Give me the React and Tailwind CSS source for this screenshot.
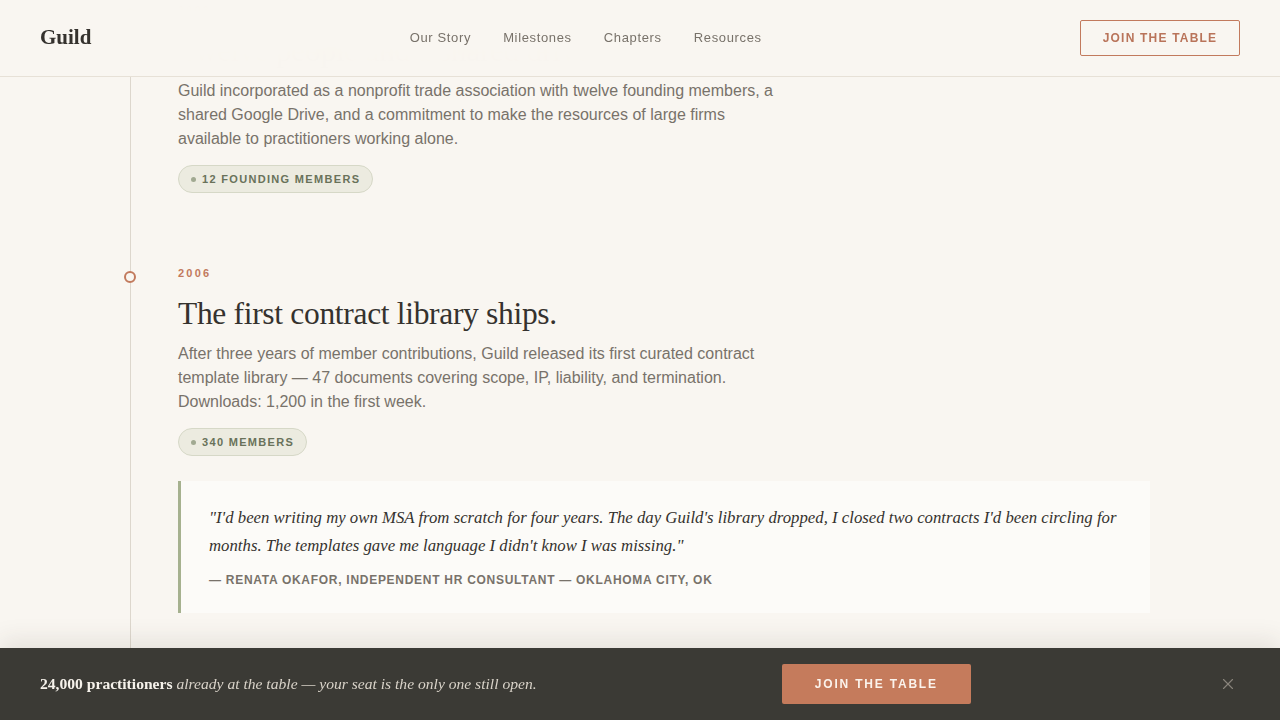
import { X } from 'lucide-react';

const sans = "font-['Liberation_Sans',Arial,sans-serif]";
const serif = "font-['Liberation_Serif','Times_New_Roman',serif]";

function Badge({ children }) {
  return (
    <span className={`mt-[14px] inline-flex h-7 items-center gap-[6px] rounded-full border border-[#d6d8c7] bg-[#ecebe0] px-3 text-[11px] font-bold uppercase tracking-[0.12em] text-[#69725a] ${sans}`}>
      <span className="h-[5px] w-[5px] rounded-full bg-[#a1a991]" />
      {children}
    </span>
  );
}

function Entry({ year, title, children, badge, quote }) {
  return (
    <div className="relative pb-[72px]">
      {/* marker on the timeline */}
      <span className="absolute left-[-54px] top-[6px] h-3 w-3 rounded-full border-2 border-[#c27a5d] bg-[#f9f6f1]" />
      <p className={`text-[11px] font-bold leading-4 tracking-[0.2em] text-[#c27a5d] ${sans}`}>{year}</p>
      <h2 className={`mt-[13px] text-[31.5px] leading-10 tracking-[-0.01em] text-[#35322e] ${serif}`}>{title}</h2>
      <p className={`mt-2 max-w-[600px] text-base leading-6 text-[#78726a] ${sans}`}>{children}</p>
      <Badge>{badge}</Badge>
      {quote && (
        <blockquote className="mt-[25px] max-w-[972px] border-l-[3px] border-[#a6b18f] bg-[#fcfbf8] pb-[25px] pl-7 pr-6 pt-[23px]">
          <p className={`text-[16.75px] italic leading-7 text-[#35322e] ${serif}`}>{quote.text}</p>
          <p className={`mt-3 text-xs font-bold uppercase leading-4 tracking-[0.06em] text-[#78726a] ${sans}`}>{quote.by}</p>
        </blockquote>
      )}
    </div>
  );
}

export default function App() {
  return (
    <div className="h-screen overflow-hidden bg-[#f9f6f1]">
      {/* Header */}
      <header className="fixed inset-x-0 top-0 z-20 flex h-[77px] items-center justify-between border-b border-[#e7e1d7] bg-[#f9f6f1]/[0.985] px-10 backdrop-blur-md">
        <span className={`text-[21px] font-bold text-[#35322e] ${serif}`}>Guild</span>
        <nav className={`flex gap-8 text-[13px] tracking-[0.05em] text-[#78726a] ${sans}`}>
          <a>Our Story</a>
          <a>Milestones</a>
          <a>Chapters</a>
          <a>Resources</a>
        </nav>
        <button className={`flex h-9 w-40 items-center justify-center rounded-[2px] border border-[#c27a5d] text-xs font-bold tracking-[0.1em] text-[#b9745a] ${sans}`}>
          JOIN THE TABLE
        </button>
      </header>

      {/* Timeline */}
      <main className="px-10 pt-[2px]">
        <div className="ml-[90px] border-l border-[#ddd7cd] pl-[47px]">
          <Entry
            year="2003"
            title="Twelve people and a shared drive."
            badge="12 founding members"
          >
            Guild incorporated as a nonprofit trade association with twelve founding members, a shared Google Drive, and a commitment to make the resources of large firms available to practitioners working alone.
          </Entry>
          <Entry
            year="2006"
            title="The first contract library ships."
            badge="340 members"
            quote={{
              text: '"I\'d been writing my own MSA from scratch for four years. The day Guild\'s library dropped, I closed two contracts I\'d been circling for months. The templates gave me language I didn\'t know I was missing."',
              by: '— Renata Okafor, Independent HR Consultant — Oklahoma City, OK',
            }}
          >
            After three years of member contributions, Guild released its first curated contract template library — 47 documents covering scope, IP, liability, and termination. Downloads: 1,200 in the first week.
          </Entry>
        </div>
      </main>

      {/* Sticky join bar */}
      <div className="fixed inset-x-0 bottom-0 z-20 flex h-[72px] items-center justify-between bg-[#3b3a35] px-10 shadow-[0_-8px_24px_rgba(60,50,40,0.10)]">
        <p className={`text-[15.6px] text-[#d9d3c9] ${serif}`}>
          <span className="font-bold text-[#f6f2eb]">24,000 practitioners</span>{' '}
          <em>already at the table — your seat is the only one still open.</em>
        </p>
        <button className={`flex h-10 w-[189px] items-center justify-center rounded-[2px] bg-[#c57b5c] text-xs font-bold tracking-[0.15em] text-[#fbf3ec] ${sans}`}>
          JOIN THE TABLE
        </button>
        <button className="flex w-6 justify-center text-[#8a857c]">
          <X size={18} strokeWidth={1.5} />
        </button>
      </div>
    </div>
  );
}
